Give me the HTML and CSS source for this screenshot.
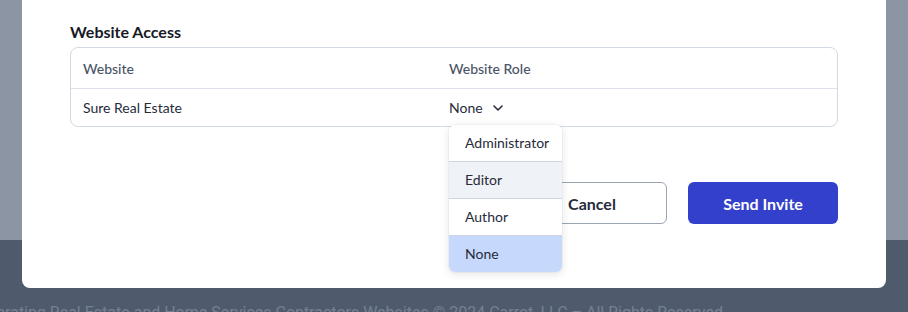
FILE: index.html
```html
<!DOCTYPE html>
<html lang="en">
<head>
    <meta charset="UTF-8">
    <meta name="viewport" content="width=device-width, initial-scale=1.0">
    <title>Invite User</title>
    <link rel="stylesheet" href="styles.css">
</head>
<body>
    <div class="page">
        <div class="page-content"></div>
        <footer class="site-footer">
            <p>Carrot Marketing Platform Incorporating Real Estate and Home Services Contractors Websites © 2024 Carrot, LLC – All Rights Reserved</p>
        </footer>
    </div>

    <div class="overlay">
        <div class="modal">
            <h3 class="section-title">Website Access</h3>
            <div class="access-table">
                <div class="row head">
                    <div class="cell">Website</div>
                    <div class="cell">Website Role</div>
                </div>
                <div class="row">
                    <div class="cell">Sure Real Estate</div>
                    <div class="cell">
                        <div class="role-select">
                            <button class="role-trigger">
                                None
                                <svg width="10" height="6" viewBox="0 0 10 6" fill="none">
                                    <path d="M1 1l4 4 4-4" stroke="#1f2433" stroke-width="1.5" stroke-linecap="round" stroke-linejoin="round"/>
                                </svg>
                            </button>
                            <ul class="role-menu">
                                <li>Administrator</li>
                                <li class="hover">Editor</li>
                                <li>Author</li>
                                <li class="selected">None</li>
                            </ul>
                        </div>
                    </div>
                </div>
            </div>
            <div class="actions">
                <button class="btn btn-outline">Cancel</button>
                <button class="btn btn-primary">Send Invite</button>
            </div>
        </div>
    </div>
</body>
</html>
```

FILE: styles.css
```css
body {
    margin: 0;
    font-family: Lato, "Liberation Sans", sans-serif;
    overflow: hidden;
}

.page {
    height: 312px;
    display: flex;
    flex-direction: column;
}

.page-content {
    height: 240px;
    background-color: #ffffff;
}

.site-footer {
    flex: 1;
    background-color: #878991;
    overflow: hidden;
}

.site-footer p {
    margin: 0;
    padding: 63px 185px 0 0;
    display: flex;
    justify-content: flex-end;
    font-family: Roboto, sans-serif;
    font-size: 16px;
    white-space: nowrap;
    color: #cfd4dc;
}

.overlay {
    position: absolute;
    inset: 0;
    background-color: rgba(23, 43, 73, 0.5);
    padding: 0 22px;
}

.modal {
    background: #fff;
    height: 288px;
    border-radius: 0 0 8px 8px;
    box-sizing: border-box;
    padding: 22px 48px 0;
}

.section-title {
    margin: 0 0 6px;
    font-size: 16px;
    font-weight: 700;
    color: #171a26;
    line-height: 19px;
}

.access-table {
    border: 1px solid #d3d9e2;
    border-radius: 8px;
}

.row {
    display: grid;
    grid-template-columns: 366px 1fr;
    height: 37px;
    align-items: center;
    padding: 0 12px;
    font-size: 14px;
    color: #272b3a;
}

.row.head {
    height: 40px;
    border-bottom: 1px solid #dde2ea;
    color: #4b5467;
    font-weight: 500;
}

.role-select {
    position: relative;
}

.role-trigger {
    display: flex;
    align-items: center;
    gap: 10px;
    border: none;
    background: none;
    padding: 0;
    font: inherit;
    color: #272b3a;
}

.role-menu {
    position: absolute;
    top: 26px;
    left: 0;
    width: 113px;
    margin: 0;
    padding: 0;
    list-style: none;
    background: #fff;
    border-radius: 6px;
    box-shadow: 0 2px 8px rgba(15, 23, 42, 0.12), 0 0 0 1px rgba(15, 23, 42, 0.03);
    overflow: hidden;
    z-index: 10;
}

.role-menu li {
    height: 36px;
    line-height: 36px;
    padding: 0 16px;
    font-size: 14px;
    color: #272b3a;
    border-bottom: 1px solid #cfd6e1;
}

.role-menu li:last-child {
    border-bottom: none;
}

.role-menu li.hover {
    background-color: #eff2f6;
}

.role-menu li.selected {
    background-color: #c6d9fc;
}

.actions {
    display: flex;
    justify-content: flex-end;
    gap: 21px;
    margin-top: 55px;
}

.btn {
    width: 150px;
    height: 42px;
    border-radius: 6px;
    font-family: inherit;
    font-size: 16px;
    font-weight: 700;
    cursor: pointer;
}

.btn-outline {
    background: #fff;
    border: 1px solid #9aa4b4;
    color: #272b3a;
}

.btn-primary {
    background-color: #3340cc;
    border: none;
    color: #fff;
}
```
